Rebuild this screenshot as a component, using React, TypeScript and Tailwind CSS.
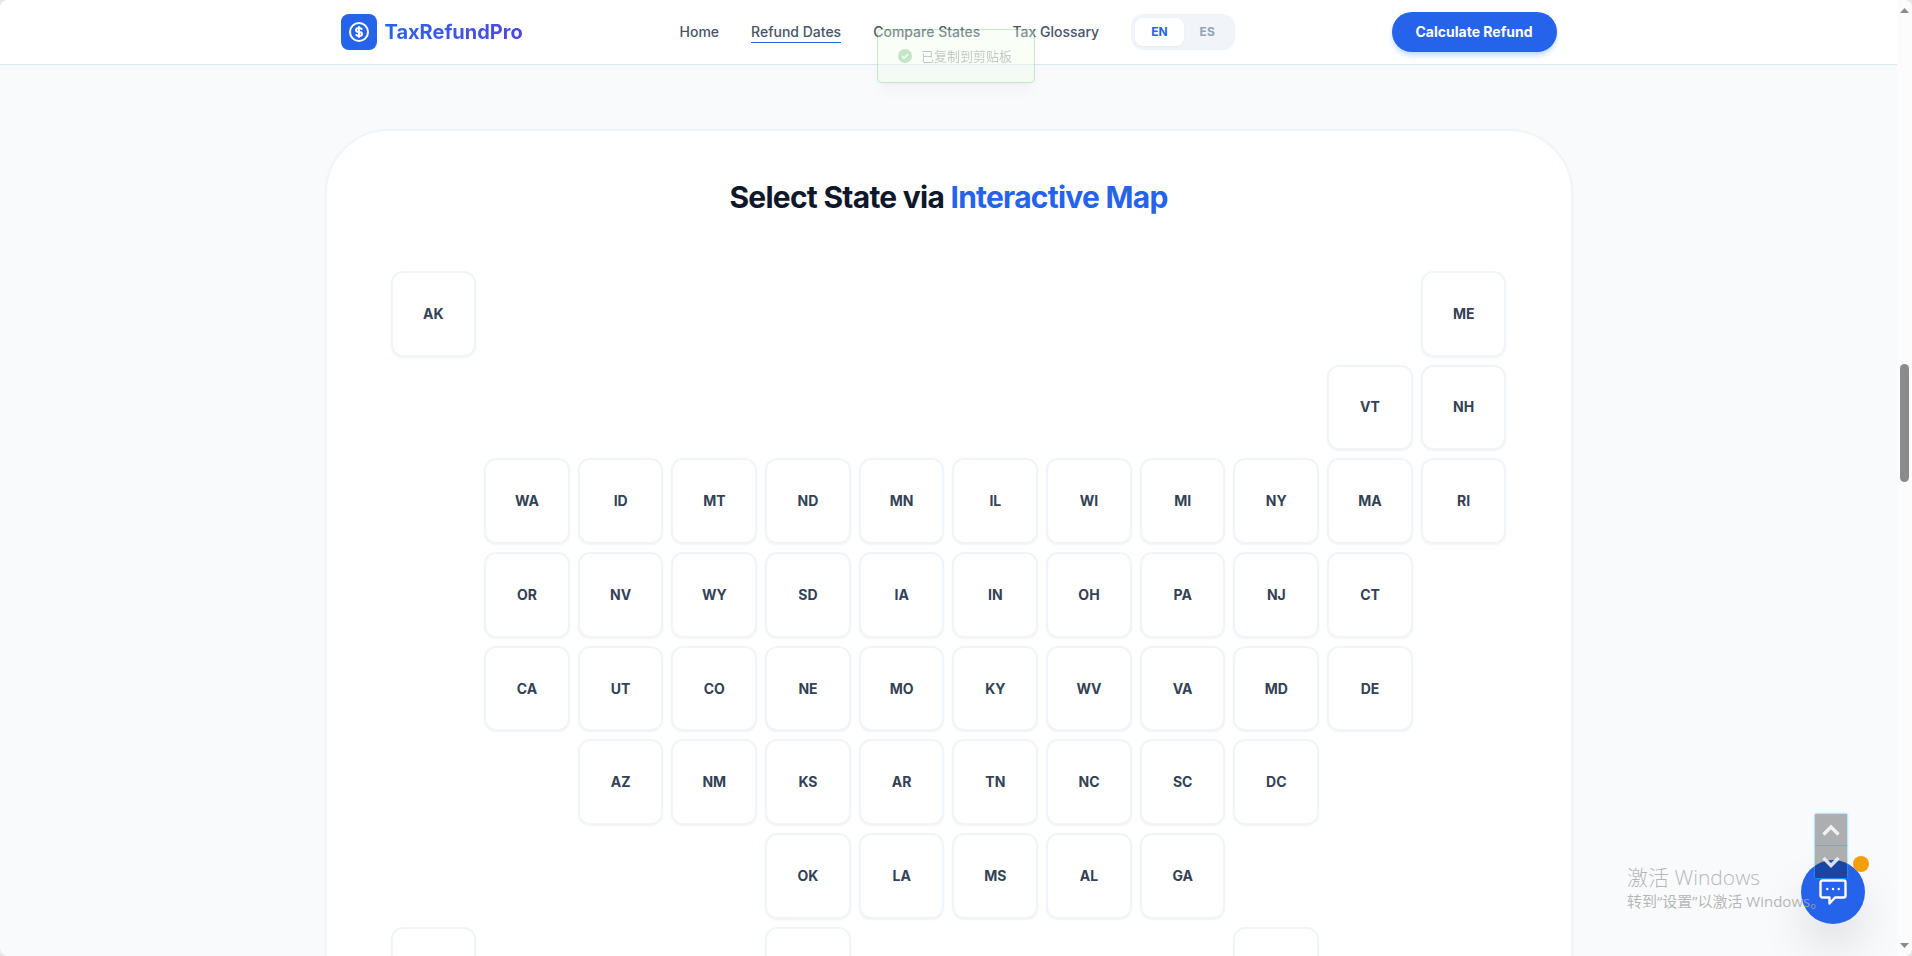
import React from 'react';

const navLinks = [
  { label: 'Home', active: false },
  { label: 'Refund Dates', active: true },
  { label: 'Compare States', active: false },
  { label: 'Tax Glossary', active: false },
];

// One entry per map row, one cell per column. Empty strings are blank cells.
const mapRows = [
  ['AK', '', '', '', '', '', '', '', '', '', '', 'ME'],
  ['', '', '', '', '', '', '', '', '', '', 'VT', 'NH'],
  ['', 'WA', 'ID', 'MT', 'ND', 'MN', 'IL', 'WI', 'MI', 'NY', 'MA', 'RI'],
  ['', 'OR', 'NV', 'WY', 'SD', 'IA', 'IN', 'OH', 'PA', 'NJ', 'CT', ''],
  ['', 'CA', 'UT', 'CO', 'NE', 'MO', 'KY', 'WV', 'VA', 'MD', 'DE', ''],
  ['', '', 'AZ', 'NM', 'KS', 'AR', 'TN', 'NC', 'SC', 'DC', '', ''],
  ['', '', '', '', 'OK', 'LA', 'MS', 'AL', 'GA', '', '', ''],
  ['HI', '', '', '', 'TX', '', '', '', '', 'FL', '', ''],
];

function Logo() {
  return (
    <a href="#" className="flex items-center gap-2">
      <span className="flex h-9 w-9 items-center justify-center rounded-lg bg-[#2563eb] text-white">
        <svg viewBox="0 0 24 24" className="h-6 w-6" fill="none" stroke="currentColor" strokeWidth="2" strokeLinecap="round" strokeLinejoin="round">
          <path d="M12 8c-1.657 0-3 .895-3 2s1.343 2 3 2 3 .895 3 2-1.343 2-3 2m0-8c1.11 0 2.08.402 2.599 1M12 8V7m0 1v8m0 0v1m0-1c-1.11 0-2.08-.402-2.599-1M21 12a9 9 0 11-18 0 9 9 0 0118 0z" />
        </svg>
      </span>
      <span className="bg-gradient-to-r from-[#2563eb] to-[#4f46e5] bg-clip-text text-xl font-bold text-transparent">
        TaxRefundPro
      </span>
    </a>
  );
}

function Header() {
  return (
    <header className="border-b border-[#dbe6f3] bg-white">
      <div className="mx-auto flex h-16 max-w-7xl items-center justify-between px-8">
        <Logo />
        <nav className="flex items-center gap-8">
          {navLinks.map((link) => (
            <a
              key={link.label}
              href="#"
              className={
                link.active
                  ? 'border-b border-[#2563eb] text-sm font-medium text-[#475569]'
                  : 'text-sm font-medium text-[#475569]'
              }
            >
              {link.label}
            </a>
          ))}
          <div className="flex rounded-xl bg-[#f1f5f9] p-1 text-xs font-bold">
            <button type="button" className="rounded-lg bg-white px-4 py-1.5 text-[#2563eb] shadow-xs">
              EN
            </button>
            <button type="button" className="rounded-lg px-4 py-1.5 text-[#94a3b8]">
              ES
            </button>
          </div>
        </nav>
        <button
          type="button"
          className="rounded-full bg-[#2563eb] px-6 py-2.5 text-sm font-bold text-white shadow-md shadow-[#bfdbfe]"
        >
          Calculate Refund
        </button>
      </div>
    </header>
  );
}

function StateMap() {
  return (
    <section className="mx-auto mt-16 max-w-7xl px-4">
      <div className="rounded-[64px] border-2 border-[#f1f5f9] bg-white px-16 py-12 shadow-xs">
        <h2 className="mb-14 text-center text-3xl font-bold tracking-tight text-[#0f172a]">
          Select State via <span className="text-[#2563eb]">Interactive Map</span>
        </h2>
        <div className="grid grid-cols-12 gap-2">
          {mapRows.flat().map((code, index) =>
            code ? (
              <button
                key={code}
                type="button"
                className="aspect-square rounded-xl border-2 border-[#f1f5f9] bg-white text-sm font-bold text-[#334155] shadow-xs"
              >
                {code}
              </button>
            ) : (
              <div key={index} />
            ),
          )}
        </div>
      </div>
    </section>
  );
}

function Toast() {
  return (
    <div
      role="status"
      className="absolute top-[29px] left-1/2 flex h-[54px] w-[158px] -translate-x-1/2 items-center gap-2 rounded-sm border border-[#67c26f] bg-[#effeea] pl-[19px] text-[13px] text-[#606266] opacity-35 shadow-lg"
    >
      <svg viewBox="0 0 16 16" className="h-4 w-4">
        <circle cx="8" cy="8" r="7" fill="#55b95f" />
        <path d="M5 8.2l2.1 2.1L11 6.3" fill="none" stroke="#fff" strokeWidth="1.5" />
      </svg>
      <span className="font-['Noto_Sans_CJK_SC',sans-serif]">已复制到剪贴板</span>
    </div>
  );
}

function ChatButton() {
  return (
    <div className="absolute right-8 bottom-8">
      <button
        type="button"
        aria-label="Chat"
        className="flex h-16 w-16 items-center justify-center rounded-full bg-[#2563eb] text-white shadow-2xl"
      >
        <svg viewBox="0 0 28 28" className="h-7 w-7" fill="none" stroke="currentColor" strokeWidth="2.4" strokeLinejoin="round">
          <path d="M3.500 2.500h21a2 2 0 012 2v13a2 2 0 01-2 2h-8.500l-5.500 6v-6H3.500a2 2 0 01-2-2v-13a2 2 0 012-2z" />
          <path d="M8.300 11h.01M14 11h.01M19.700 11h.01" strokeLinecap="round" />
        </svg>
      </button>
      <span className="absolute -top-1 -right-1 h-4 w-4 rounded-full bg-[#f59e0b]" />
    </div>
  );
}

function PageJump() {
  return (
    <div className="absolute right-[50px] bottom-[78px] flex flex-col shadow-[0_0_2px_#38bdf8]">
      <button type="button" aria-label="Scroll up" className="flex h-8 w-8 items-center justify-center border-b border-[#6f9fb8]/60 bg-black/30">
        <svg viewBox="0 0 32 32" className="h-8 w-8 shrink-0" fill="none" stroke="#f1f1f1" strokeWidth="3.4">
          <path d="M8.500 20.500L16 13 23.500 20.500" />
        </svg>
      </button>
      <button type="button" aria-label="Scroll down" className="flex h-8 w-8 items-center justify-center bg-black/30">
        <svg viewBox="0 0 32 32" className="h-8 w-8 shrink-0" fill="none" stroke="#f1f1f1" strokeOpacity="0.9" strokeWidth="3.4">
          <path d="M8.500 12L16 19.500 23.500 12" />
        </svg>
      </button>
    </div>
  );
}

function ActivationNotice() {
  return (
    <div className="pointer-events-none absolute right-[74px] bottom-[45px] w-[196px] font-['Open_Sans','Noto_Sans_CJK_SC',sans-serif] whitespace-nowrap text-[#aaaaaa]/85">
      <p className="text-[21px] leading-7 font-light">激活 Windows</p>
      <p className="text-[15px] leading-5">转到“设置”以激活 Windows。</p>
    </div>
  );
}

function ScrollRail() {
  return (
    <div className="relative flex w-[15px] flex-col items-center justify-between bg-[#fcfcfc] py-2">
      <svg viewBox="0 0 9 5" className="h-[5px] w-[9px]" fill="#8b8b8b">
        <path d="M4.500 0L9 5H0z" />
      </svg>
      <div className="absolute top-91 h-[118px] w-[9px] rounded-full bg-[#8b8b8b]" />
      <svg viewBox="0 0 9 5" className="h-[5px] w-[9px]" fill="#8b8b8b">
        <path d="M0 0h9L4.500 5z" />
      </svg>
    </div>
  );
}

export default function App() {
  return (
    <div className="bg-[#e8e8e8]">
      <div className="relative flex h-screen overflow-hidden rounded-lg bg-[#f8fafc] font-['Inter',sans-serif]">
        <div className="relative min-w-0 flex-1 overflow-hidden">
          <Header />
          <StateMap />
          <ChatButton />
          <PageJump />
          <ActivationNotice />
        </div>
        <ScrollRail />
        <Toast />
      </div>
    </div>
  );
}
